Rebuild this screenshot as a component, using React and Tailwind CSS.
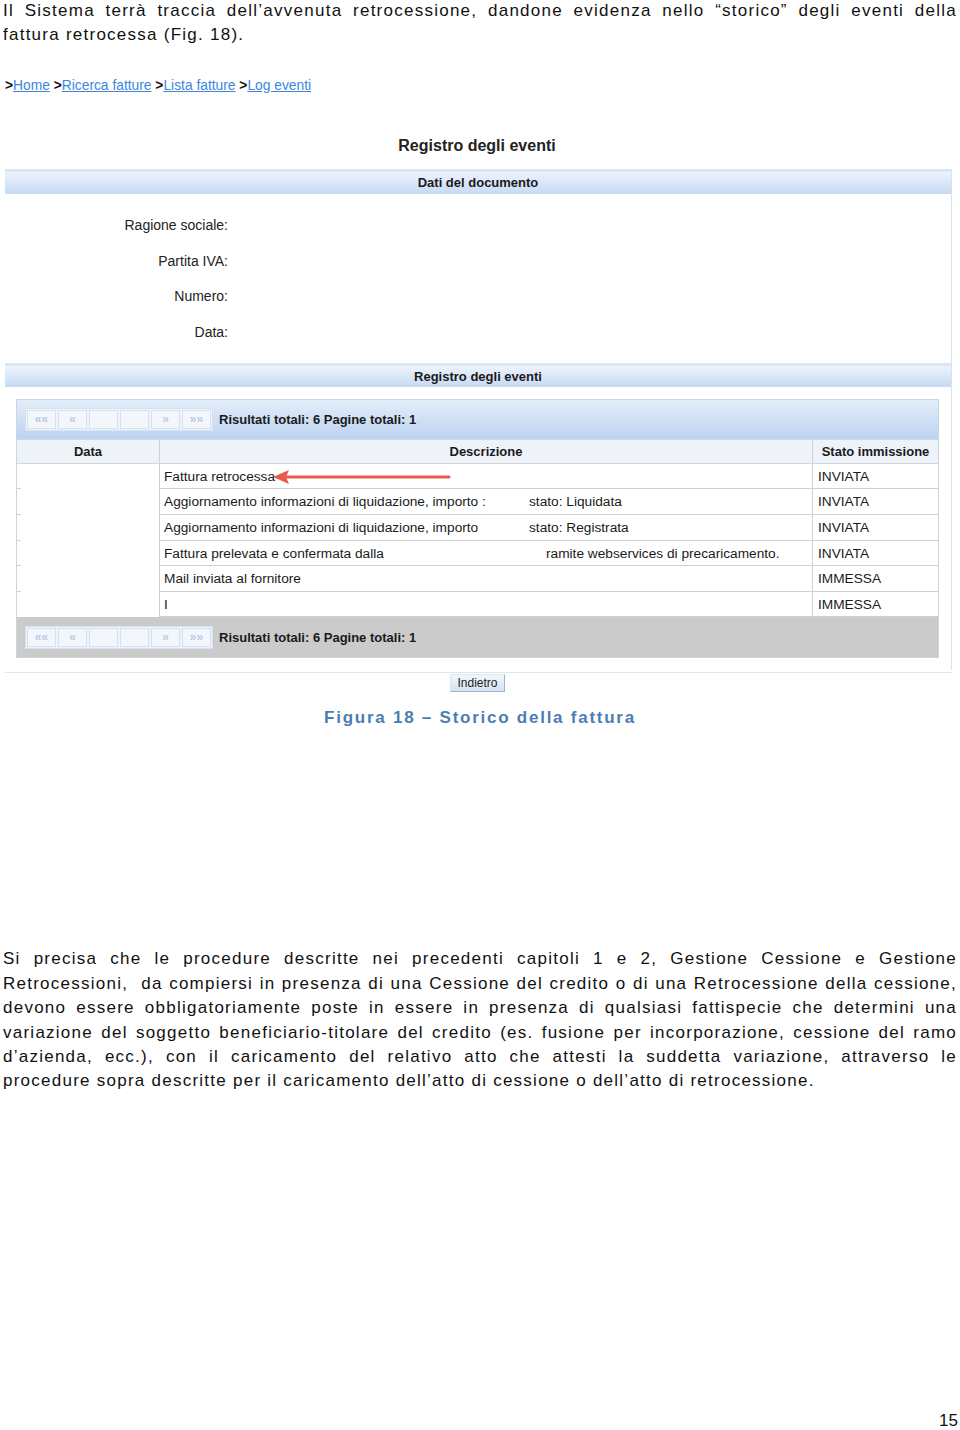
import React from "react";

const Pager = () => (
  <div className="flex items-center gap-[6px]">
    <div className="flex gap-[2px] border border-[#d3e1f1] bg-[#eef4fb] p-px">
      {["««", "«", "", "", "»", "»»"].map((g, i) => (
        <div
          key={i}
          className="flex h-[19px] w-[29px] items-center justify-center border border-[#d3e1f1] bg-[#f3f7fc] text-[12px] font-bold leading-none text-[#b9cbe2]"
        >
          {g}
        </div>
      ))}
    </div>
    <span className="text-[13px] font-bold text-[#1a1a1a]">Risultati totali: 6 Pagine totali: 1</span>
  </div>
);

const rows = [
  { a: "Fattura retrocessa", b: "", w: "", s: "INVIATA", arrow: true },
  { a: "Aggiornamento informazioni di liquidazione, importo :", b: "stato: Liquidata", w: "w-[365px]", s: "INVIATA" },
  { a: "Aggiornamento informazioni di liquidazione, importo", b: "stato: Registrata", w: "w-[365px]", s: "INVIATA" },
  { a: "Fattura prelevata e confermata dalla", b: "ramite webservices di precaricamento.", w: "w-[382px]", s: "INVIATA" },
  { a: "Mail inviata al fornitore", b: "", w: "", s: "IMMESSA" },
  { a: "I", b: "", w: "", s: "IMMESSA" },
];

export default function App() {
  return (
    <div className="flex min-h-[1430px] w-[960px] flex-col bg-white font-['Liberation_Sans',Arial,sans-serif] text-[#111]">
      <p className="mt-[-1px] px-[3px] text-justify text-[17px] leading-[24.4px] tracking-[1.25px]">
        Il Sistema terrà traccia dell’avvenuta retrocessione, dandone evidenza nello “storico” degli eventi della fattura retrocessa (Fig. 18).
      </p>

      <div className="mt-[30px] ml-[5px] text-[13.8px] leading-[16px]">
        <span className="font-bold">&gt;</span>
        <a className="text-[#3d86e0] underline">Home</a>{" "}
        <span className="font-bold">&gt;</span>
        <a className="text-[#3d86e0] underline">Ricerca fatture</a>{" "}
        <span className="font-bold">&gt;</span>
        <a className="text-[#3d86e0] underline">Lista fatture</a>{" "}
        <span className="font-bold">&gt;</span>
        <a className="text-[#3d86e0] underline">Log eventi</a>
      </div>

      <div className="mt-[43px] w-[954px] text-center text-[16px] font-bold leading-[18px] text-[#222]">Registro degli eventi</div>

      <div className="mt-[14px] ml-[5px] w-[947px] border-r border-[#d4e2f2] pb-[12px]">
        <div className="border-t-[3px] border-[#dbe7f5] bg-gradient-to-b from-[#edf3fc] to-[#c6daf4] text-center text-[13px] font-bold leading-[22px] text-[#1a1a1a]">
          Dati del documento
        </div>
        <div className="pt-[14px] pb-[13px]">
          {["Ragione sociale:", "Partita IVA:", "Numero:", "Data:"].map((l) => (
            <div key={l} className="flex h-[35.5px] items-center">
              <div className="w-[223px] text-right text-[14px] text-[#222]">{l}</div>
            </div>
          ))}
        </div>
        <div className="border-t-[3px] border-[#dbe7f5] bg-gradient-to-b from-[#edf3fc] to-[#c6daf4] text-center text-[13px] font-bold leading-[21px] text-[#1a1a1a]">
          Registro degli eventi
        </div>

        <div className="mt-[12px] ml-[11px] w-[923px] border border-[#c9d6e5]">
          <div className="flex h-[39px] items-center bg-gradient-to-b from-[#e3edf9] to-[#bcd3f1] pl-[8px]">
            <Pager />
          </div>
          <div className="flex h-[25px] border-y border-[#d6d6d6] bg-[#eef3fa] text-[13px] font-bold leading-[23px] text-[#1a1a1a]">
            <div className="w-[142px] text-center">Data</div>
            <div className="w-[653px] border-l border-[#d0d0d0] text-center">Descrizione</div>
            <div className="flex-1 border-l border-[#d0d0d0] text-center">Stato immissione</div>
          </div>
          {rows.map((r, i) => (
            <div key={i} className="flex h-[25.6px] text-[13.7px] leading-[25px] text-[#1a1a1a]">
              <div className="w-[142px]">
                {i < 5 && <div className="mt-[24.6px] h-px w-[4px] bg-[#d0d0d0]" />}
              </div>
              <div className="relative flex w-[653px] border-b border-l border-[#d0d0d0] pl-[4px]">
                <span className={`${r.w} whitespace-nowrap`}>{r.a}</span>
                {r.b && <span className="whitespace-nowrap">{r.b}</span>}
                {r.arrow && (
                  <svg className="absolute left-[112px] top-[4px]" width="182" height="18" viewBox="0 0 182 18">
                    <line x1="12" y1="9" x2="177" y2="9" stroke="#e85a4e" strokeWidth="3" strokeLinecap="round" />
                    <path d="M1 9 L17 2 L14 9 L17 16 Z" fill="#e85a4e" />
                  </svg>
                )}
              </div>
              <div className="flex-1 border-b border-l border-[#d0d0d0] pl-[5px]">{r.s}</div>
            </div>
          ))}
          <div className="flex h-[40px] items-center bg-[#cbcbcb] pl-[8px]">
            <Pager />
          </div>
        </div>
      </div>
      <div className="ml-[5px] h-[3px] w-[947px] border-b border-[#dbe6f3]" />

      <div className="mt-[1px] flex w-[955px] justify-center">
        <button className="h-[18px] w-[55px] border border-[#9fb3cc] border-t-[#dfe7f1] border-l-[#dfe7f1] bg-gradient-to-b from-[#f4f8fc] to-[#d6e2f0] text-[12px] leading-[15px] text-[#222]">
          Indietro
        </button>
      </div>

      <div className="mt-[16px] w-[960px] text-center text-[17px] font-bold leading-[20px] tracking-[1.75px] text-[#4d7db3]">
        Figura 18 – Storico della fattura
      </div>

      <p className="mt-[219px] px-[3px] text-justify text-[17px] leading-[24.4px] tracking-[1.25px]">
        Si precisa che le procedure descritte nei precedenti capitoli 1 e 2, Gestione Cessione e Gestione Retrocessioni,&nbsp; da compiersi in presenza di una Cessione del credito o di una Retrocessione della cessione, devono essere obbligatoriamente poste in essere in presenza di qualsiasi fattispecie che determini una variazione del soggetto beneficiario-titolare del credito (es. fusione per incorporazione, cessione del ramo d’azienda, ecc.), con il caricamento del relativo atto che attesti la suddetta variazione, attraverso le procedure sopra descritte per il caricamento dell’atto di cessione o dell’atto di retrocessione.
      </p>

      <div className="mt-auto mb-[-2px] flex justify-end pr-[2px] text-[17px] leading-[22px]">15</div>
    </div>
  );
}
